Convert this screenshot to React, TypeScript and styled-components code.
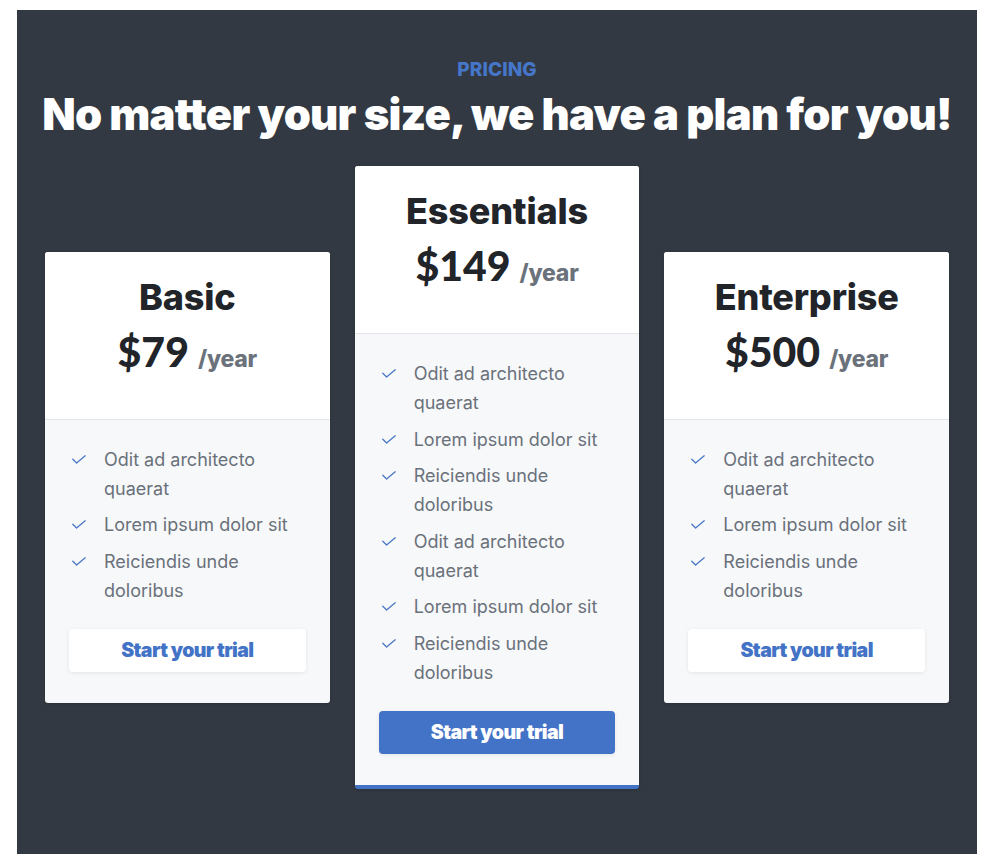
import React from "react";
import styled, { createGlobalStyle } from "styled-components";

const GlobalStyle = createGlobalStyle`
  html, body { margin: 0; padding: 0; background: #ffffff; }
  body { font-family: Inter, "Noto Sans", sans-serif; }
  * { box-sizing: border-box; }
`;

const Page = styled.div`
  padding-top: 10px;
  display: flex;
  justify-content: center;
`;

const Section = styled.section`
  width: 960px;
  background: #323942;
  padding: 47px 28px 65px 28px;
  display: flex;
  flex-direction: column;
  align-items: center;
`;

const Eyebrow = styled.div`
  color: #4676c9;
  font-family: Inter, sans-serif;
  font-weight: 800;
  font-size: 19px;
  line-height: 26px;
  letter-spacing: 0.005em;
`;

const Heading = styled.h1`
  margin: 6px 0 0 0;
  color: #ffffff;
  font-family: Inter, sans-serif;
  font-weight: 900;
  font-size: 43.5px;
  line-height: 50px;
  letter-spacing: -0.017em;
  text-align: center;
  white-space: nowrap;
`;

const Cards = styled.div`
  margin-top: 27px;
  width: 100%;
  display: grid;
  grid-template-columns: repeat(3, 1fr);
  gap: 25px;
  align-items: center;
`;

const Card = styled.div<{ $featured?: boolean }>`
  background: #f7f8fa;
  border-radius: 3px;
  overflow: hidden;
  box-shadow: 0 1px 3px rgba(0, 0, 0, 0.15);
  border-bottom: ${(p) => (p.$featured ? "4px solid #4373c6" : "none")};
`;

const CardHeader = styled.div`
  background: #ffffff;
  border-bottom: 1px solid #e3e5e8;
  height: 168px;
  display: flex;
  flex-direction: column;
  align-items: center;
  padding-top: 24px;
`;

const PlanName = styled.div`
  color: #212429;
  font-family: Inter, sans-serif;
  font-weight: 800;
  font-size: 36px;
  line-height: 42px;
  letter-spacing: -0.005em;
`;

const PriceRow = styled.div`
  margin-top: 9px;
  display: flex;
  align-items: baseline;
  gap: 9px;
`;

const Price = styled.span`
  color: #212429;
  font-family: Lato, sans-serif;
  font-weight: 900;
  font-size: 41px;
  line-height: 50px;
`;

const Period = styled.span`
  color: #6b727b;
  font-family: Inter, sans-serif;
  font-weight: 800;
  font-size: 23px;
  letter-spacing: -0.01em;
`;

const CardBody = styled.div`
  padding: 25px 24px 31px 24px;
`;

const FeatureList = styled.ul`
  list-style: none;
  margin: 0;
  padding: 0;
  display: flex;
  flex-direction: column;
  gap: 7.5px;
`;

const Feature = styled.li`
  display: flex;
  align-items: flex-start;
  gap: 18px;
  color: #6a717b;
  font-family: Inter, sans-serif;
  font-size: 18px;
  line-height: 29px;
  padding-left: 3px;
`;

const CheckIcon = styled.svg`
  flex: none;
  margin-top: 10px;
  width: 14px;
  height: 9px;
`;

const Button = styled.button<{ $primary?: boolean }>`
  margin-top: 24px;
  width: 100%;
  height: 43px;
  border: none;
  border-radius: 4px;
  background: ${(p) => (p.$primary ? "#4373c6" : "#ffffff")};
  color: ${(p) => (p.$primary ? "#ffffff" : "#4373c6")};
  box-shadow: 0 1px 4px rgba(0, 0, 0, 0.08);
  font-family: Inter, sans-serif;
  font-weight: 900;
  font-size: 19.5px;
  letter-spacing: -0.03em;
  cursor: pointer;
`;

const Check = () => (
  <CheckIcon viewBox="0 0 14 9" fill="none">
    <path d="M0.8 4.2 L4.6 8 L13.2 0.8" stroke="#4a78c6" strokeWidth="1.3" strokeLinecap="round" strokeLinejoin="round" />
  </CheckIcon>
);

type Plan = { name: string; price: string; features: string[]; featured?: boolean };

const basicFeatures = ["Odit ad architecto quaerat", "Lorem ipsum dolor sit", "Reiciendis unde doloribus"];

const plans: Plan[] = [
  { name: "Basic", price: "$79", features: basicFeatures },
  { name: "Essentials", price: "$149", features: [...basicFeatures, ...basicFeatures], featured: true },
  { name: "Enterprise", price: "$500", features: basicFeatures },
];

export default function App() {
  return (
    <>
      <GlobalStyle />
      <Page>
        <Section>
          <Eyebrow>PRICING</Eyebrow>
          <Heading>No matter your size, we have a plan for you!</Heading>
          <Cards>
            {plans.map((plan) => (
              <Card key={plan.name} $featured={plan.featured}>
                <CardHeader>
                  <PlanName>{plan.name}</PlanName>
                  <PriceRow>
                    <Price>{plan.price}</Price>
                    <Period>/year</Period>
                  </PriceRow>
                </CardHeader>
                <CardBody>
                  <FeatureList>
                    {plan.features.map((f, i) => (
                      <Feature key={i}>
                        <Check />
                        <span>{f}</span>
                      </Feature>
                    ))}
                  </FeatureList>
                  <Button $primary={plan.featured}>Start your trial</Button>
                </CardBody>
              </Card>
            ))}
          </Cards>
        </Section>
      </Page>
    </>
  );
}
